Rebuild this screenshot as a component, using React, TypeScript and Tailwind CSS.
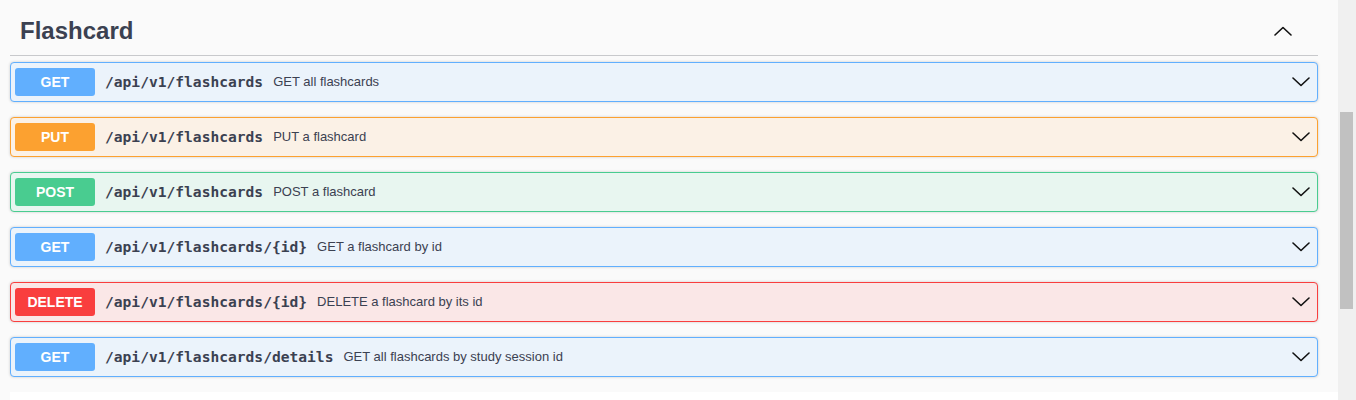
import React from 'react';

type Op = {
  method: 'GET' | 'PUT' | 'POST' | 'DELETE';
  path: string;
  summary: string;
};

const ops: Op[] = [
  { method: 'GET', path: '/api/v1/flashcards', summary: 'GET all flashcards' },
  { method: 'PUT', path: '/api/v1/flashcards', summary: 'PUT a flashcard' },
  { method: 'POST', path: '/api/v1/flashcards', summary: 'POST a flashcard' },
  { method: 'GET', path: '/api/v1/flashcards/{id}', summary: 'GET a flashcard by id' },
  { method: 'DELETE', path: '/api/v1/flashcards/{id}', summary: 'DELETE a flashcard by its id' },
  { method: 'GET', path: '/api/v1/flashcards/details', summary: 'GET all flashcards by study session id' },
];

// full class strings per method so tailwind picks them up
const styles: Record<Op['method'], { box: string; badge: string }> = {
  GET: { box: 'border-[#61affe] bg-[#ebf3fb]', badge: 'bg-[#61affe]' },
  PUT: { box: 'border-[#fca130] bg-[#fbf1e6]', badge: 'bg-[#fca130]' },
  POST: { box: 'border-[#49cc90] bg-[#e8f6f0]', badge: 'bg-[#49cc90]' },
  DELETE: { box: 'border-[#f93e3e] bg-[#fae7e7]', badge: 'bg-[#f93e3e]' },
};

function Chevron({ up = false }: { up?: boolean }) {
  return (
    <svg width="18" height="10" viewBox="0 0 18 10" fill="none" className="block">
      <polyline
        points={up ? '1,9 9,1.5 17,9' : '1,1 9,8.5 17,1'}
        stroke="#111"
        strokeWidth="1.6"
        strokeLinecap="round"
        strokeLinejoin="round"
      />
    </svg>
  );
}

function OpRow({ op }: { op: Op }) {
  const s = styles[op.method];
  return (
    <div
      className={`mb-[15px] flex h-[40px] items-center rounded-[4px] border pl-[4px] pr-[7px] shadow-[0_0_3px_rgba(0,0,0,0.19)] ${s.box}`}
    >
      <span
        className={`flex h-[28px] w-[80px] items-center justify-center rounded-[3px] text-[14px] font-bold text-white ${s.badge}`}
      >
        {op.method}
      </span>
      <span className="ml-[10px] font-['DejaVu_Sans_Mono',monospace] text-[14.6px] font-bold text-[#3b4151]">
        {op.path}
      </span>
      <span className="ml-[10px] text-[13px] text-[#3b4151]">{op.summary}</span>
      <span className="ml-auto">
        <Chevron />
      </span>
    </div>
  );
}

export default function App() {
  return (
    <div className="flex h-[400px] w-full overflow-hidden bg-[#fafafa] font-['Liberation_Sans',Arial,sans-serif]">
      <main className="flex-1">
        <section className="ml-[10px] w-[1308px]">
          {/* tag header */}
          <div className="flex h-[56px] items-center border-b border-[#c8c9cc] pt-[6px] pl-[10px] pr-[26px]">
            <h3 className="text-[24px] font-bold text-[#3b4151]">Flashcard</h3>
            <span className="ml-auto">
              <Chevron up />
            </span>
          </div>
          <div className="pt-[6px]">
            {ops.map((op, i) => (
              <OpRow key={i} op={op} />
            ))}
          </div>
        </section>
        <div className="ml-[10px] h-[20px] bg-white" />
      </main>
      {/* scrollbar */}
      <div className="w-[18px] bg-[#f0f0f0] pl-[2px] pt-[112px]">
        <div className="h-[197px] w-[13px] bg-[#c1c1c1]" />
      </div>
    </div>
  );
}
